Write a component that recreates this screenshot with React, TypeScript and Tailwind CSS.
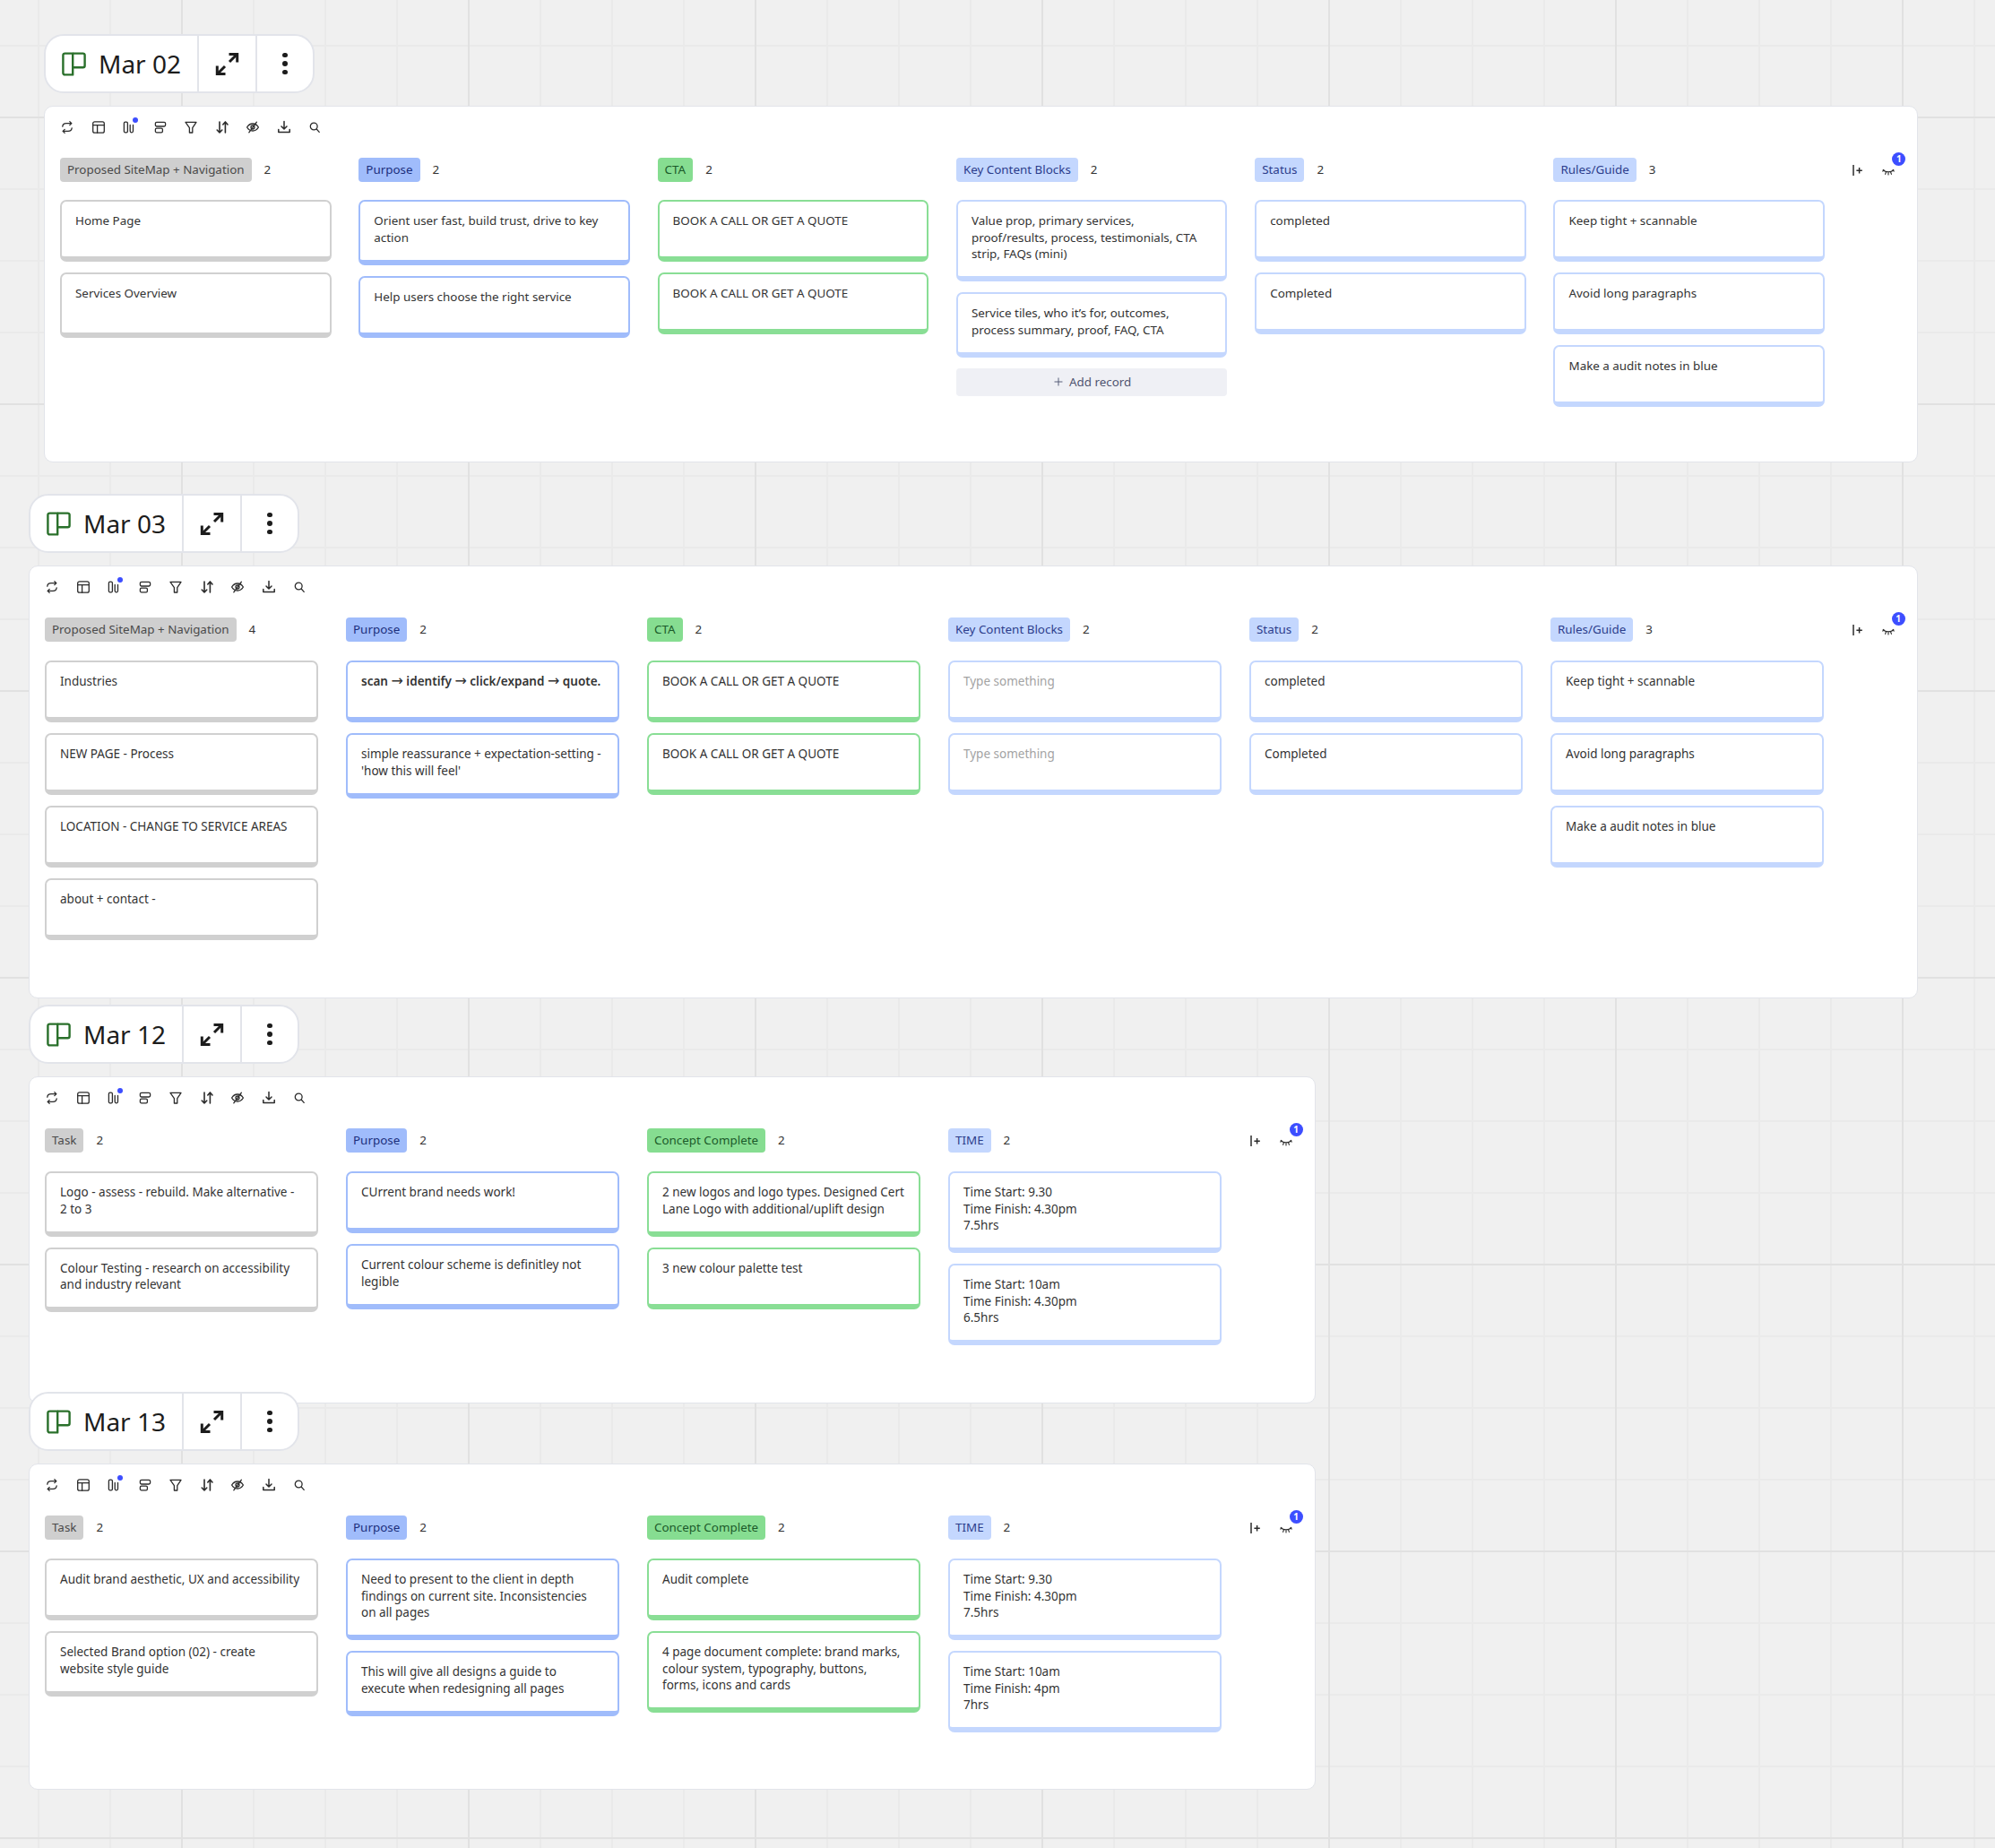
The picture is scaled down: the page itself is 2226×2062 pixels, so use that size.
import { Plus } from 'lucide-react'

type CardData = { text: string; tall?: boolean; placeholder?: boolean; bold?: boolean }
type Tone = 'gray' | 'blue' | 'green' | 'light'
type Column = { title: string; tone: Tone; count: number; cards: CardData[]; addRecord?: boolean }

const tagTone: Record<Tone, string> = {
  gray: 'bg-[#cfcfcf] text-[#4a4a4a]',
  blue: 'bg-[#a0bcfb] text-[#1c2f7d]',
  green: 'bg-[#86dd91] text-[#1b5a2a]',
  light: 'bg-[#c4d7fe] text-[#2c3d8c]',
}

const cardTone: Record<Tone, string> = {
  gray: 'border-[#d0d0d0]',
  blue: 'border-[#a0bcfb]',
  green: 'border-[#89de95]',
  light: 'border-[#c4d7fe]',
}

const t = (text: string): CardData => ({ text })
const cta = [t('BOOK A CALL OR GET A QUOTE'), t('BOOK A CALL OR GET A QUOTE')]
const status = [t('completed'), t('Completed')]
const rules = [t('Keep tight + scannable'), t('Avoid long paragraphs'), t('Make a audit notes in blue')]

const mar02: Column[] = [
  { title: 'Proposed SiteMap + Navigation', tone: 'gray', count: 2, cards: [t('Home Page'), { text: 'Services Overview', tall: true }] },
  { title: 'Purpose', tone: 'blue', count: 2, cards: [t('Orient user fast, build trust, drive to key action'), t('Help users choose the right service')] },
  { title: 'CTA', tone: 'green', count: 2, cards: cta },
  {
    title: 'Key Content Blocks',
    tone: 'light',
    count: 2,
    addRecord: true,
    cards: [
      t('Value prop, primary services, proof/results, process, testimonials, CTA strip, FAQs (mini)'),
      t('Service tiles, who it’s for, outcomes, process summary, proof, FAQ, CTA'),
    ],
  },
  { title: 'Status', tone: 'light', count: 2, cards: status },
  { title: 'Rules/Guide', tone: 'light', count: 3, cards: rules },
]

const mar03: Column[] = [
  {
    title: 'Proposed SiteMap + Navigation',
    tone: 'gray',
    count: 4,
    cards: [t('Industries'), t('NEW PAGE - Process'), t('LOCATION - CHANGE TO SERVICE AREAS'), t('about + contact -')],
  },
  {
    title: 'Purpose',
    tone: 'blue',
    count: 2,
    cards: [
      { text: 'scan → identify → click/expand → quote.', bold: true },
      t("simple reassurance + expectation-setting - 'how this will feel'"),
    ],
  },
  { title: 'CTA', tone: 'green', count: 2, cards: cta },
  {
    title: 'Key Content Blocks',
    tone: 'light',
    count: 2,
    cards: [
      { text: 'Type something', placeholder: true },
      { text: 'Type something', placeholder: true },
    ],
  },
  { title: 'Status', tone: 'light', count: 2, cards: status },
  { title: 'Rules/Guide', tone: 'light', count: 3, cards: rules },
]

const mar12: Column[] = [
  {
    title: 'Task',
    tone: 'gray',
    count: 2,
    cards: [t('Logo - assess - rebuild. Make alternative - 2 to 3'), t('Colour Testing - research on accessibility and industry relevant')],
  },
  { title: 'Purpose', tone: 'blue', count: 2, cards: [t('CUrrent brand needs work!'), t('Current colour scheme is definitley not legible')] },
  {
    title: 'Concept Complete',
    tone: 'green',
    count: 2,
    cards: [t('2 new logos and logo types. Designed Cert Lane Logo with additional/uplift design'), t('3 new colour palette test')],
  },
  {
    title: 'TIME',
    tone: 'light',
    count: 2,
    cards: [t('Time Start: 9.30\nTime Finish: 4.30pm\n7.5hrs'), t('Time Start: 10am\nTime Finish: 4.30pm\n6.5hrs')],
  },
]

const mar13: Column[] = [
  {
    title: 'Task',
    tone: 'gray',
    count: 2,
    cards: [t('Audit brand aesthetic, UX and accessibility'), t('Selected Brand option (02) - create\nwebsite style guide')],
  },
  {
    title: 'Purpose',
    tone: 'blue',
    count: 2,
    cards: [
      t('Need to present to the client in depth findings on current site. Inconsistencies on all pages'),
      t('This will give all designs a guide to\nexecute when redesigning all pages'),
    ],
  },
  {
    title: 'Concept Complete',
    tone: 'green',
    count: 2,
    cards: [t('Audit complete'), t('4 page document complete: brand marks, colour system, typography, buttons, forms, icons and cards')],
  },
  {
    title: 'TIME',
    tone: 'light',
    count: 2,
    cards: [t('Time Start: 9.30\nTime Finish: 4.30pm\n7.5hrs'), t('Time Start: 10am\nTime Finish: 4pm\n7hrs')],
  },
]

function ToolIcon({ children }: { children: React.ReactNode }) {
  return (
    <svg viewBox="0 0 16 16" fill="none" stroke="#2b2b2b" strokeWidth="1.3" strokeLinecap="round" strokeLinejoin="round" className="w-4 h-4 shrink-0">
      {children}
    </svg>
  )
}

function Toolbar() {
  return (
    <div className="flex items-center gap-[18.5px] h-4">
      {/* sync */}
      <ToolIcon>
        <path d="M2.8 7.2C3 4.8 4.8 3.6 7 3.6h5.6" />
        <path d="M10.8 1.6l2 2-2 2" />
        <path d="M13.2 8.8c-.2 2.4-2 3.6-4.2 3.6H3.4" />
        <path d="M5.2 10.4l-2 2 2 2" />
      </ToolIcon>
      {/* table layout */}
      <ToolIcon>
        <rect x="1.7" y="1.8" width="12.6" height="12.4" rx="2" />
        <path d="M1.7 5.6h12.6M6.6 5.6v8.6" />
      </ToolIcon>
      {/* kanban */}
      <div className="relative w-4 h-4 shrink-0">
        <ToolIcon>
          <rect x="2.4" y="2.2" width="4" height="11.6" rx="1.4" />
          <path d="M9.2 5.5v6.8c0 .9.6 1.5 1.5 1.5h.3c.9 0 1.5-.6 1.5-1.5V5.5" />
        </ToolIcon>
        <span className="absolute right-[-2px] top-[-3px] w-[6px] h-[6px] rounded-full bg-[#3d4eff]" />
      </div>
      {/* group */}
      <ToolIcon>
        <rect x="2.4" y="2.4" width="11.2" height="4.6" rx="1.4" />
        <rect x="2.4" y="9.2" width="8" height="4.6" rx="1.4" />
      </ToolIcon>
      {/* filter */}
      <ToolIcon>
        <path d="M2 2.4h12l-4.2 6.2v5.4H6.4V8.6z" />
      </ToolIcon>
      {/* sort */}
      <ToolIcon>
        <g strokeWidth="1.6">
          <path d="M5 2v12M2.2 11l2.8 3 2.8-3" />
          <path d="M11.4 14V2M8.8 5l2.6-3 2.6 3" />
        </g>
      </ToolIcon>
      {/* hidden fields */}
      <ToolIcon>
        <path d="M1.6 8s2.4-4 6.4-4 6.4 4 6.4 4-2.4 4-6.4 4-6.4-4-6.4-4z" />
        <circle cx="8" cy="8" r="2" />
        <path d="M12.4 2.2L3.8 13.8" />
      </ToolIcon>
      {/* download */}
      <ToolIcon>
        <g strokeWidth="1.5">
          <path d="M8 1.6v8.2M5 7l3 3 3-3" />
          <path d="M1.8 10.6v3h12.4v-3" />
        </g>
      </ToolIcon>
      {/* search */}
      <ToolIcon>
        <circle cx="7.2" cy="7" r="3.9" />
        <path d="M10.2 10l3 3.4" />
      </ToolIcon>
    </div>
  )
}

function BoardPill({ title }: { title: string }) {
  return (
    <div className="relative flex w-[302px] h-[66px] rounded-[22px] border-2 border-[#e2e4ea] bg-white">
      <div className="flex items-center gap-[14px] w-[171px] pl-[18px] border-r-2 border-[#e2e4ea]">
        <svg viewBox="0 0 27 27" fill="none" stroke="#2a702b" strokeWidth="2.4" strokeLinejoin="round" className="w-[27px] h-[27px] shrink-0">
          <path d="M3.4 1.6h8.8v23.8H3.4a2 2 0 0 1-2-2V3.6a2 2 0 0 1 2-2z" />
          <path d="M12.2 1.6h11.4a2 2 0 0 1 2 2v11.6a2 2 0 0 1-2 2H12.2" />
        </svg>
        <span className="text-[28px] leading-none text-[#1c1c1c] whitespace-nowrap">{title}</span>
      </div>
      <div className="flex items-center justify-center w-[65px] border-r-2 border-[#e2e4ea]">
        <svg viewBox="0 0 27 27" fill="none" stroke="#1c1c1c" strokeWidth="3" className="w-[27px] h-[27px]">
          <path d="M16 11L25 2" />
          <path d="M15.5 2.4H24.7V11.6" />
          <path d="M11 16L2 25" />
          <path d="M11.5 24.6H2.3V15.4" />
        </svg>
      </div>
      <div className="flex-1 flex flex-col items-center justify-center gap-[4px]">
        <span className="w-[5.5px] h-[5.5px] rounded-full bg-[#1c1c1c]" />
        <span className="w-[5.5px] h-[5.5px] rounded-full bg-[#1c1c1c]" />
        <span className="w-[5.5px] h-[5.5px] rounded-full bg-[#1c1c1c]" />
      </div>
    </div>
  )
}

function RecordCard({ card, tone, textClass }: { card: CardData; tone: Tone; textClass: string }) {
  return (
    <div
      className={`rounded-[7px] border-2 border-b-[6px] bg-white pt-3 pb-[15.5px] px-[15px] leading-[18.5px] whitespace-pre-line ${textClass} ${cardTone[tone]} ${
        card.tall ? 'min-h-[73px]' : 'min-h-[69px]'
      } ${card.placeholder ? 'text-[#a3a3a3]' : 'text-[#333333]'} ${card.bold ? 'font-semibold' : ''}`}
    >
      {card.bold
        ? card.text.split('→').map((part, i) => (
            <span key={i}>
              {i > 0 && <span className="font-['DejaVu_Sans',sans-serif] font-normal text-[16px] leading-none">→</span>}
              {part}
            </span>
          ))
        : card.text}
    </div>
  )
}

function BoardColumn({
  column,
  width,
  cardsClass,
  textClass,
}: {
  column: Column
  width: string
  cardsClass: string
  textClass: string
}) {
  return (
    <div className={`shrink-0 ${width}`}>
      <div className="flex items-center h-[27px]">
        <span className={`h-[27px] flex items-center px-2 rounded-[4px] text-[13.4px] whitespace-nowrap ${tagTone[column.tone]}`}>
          {column.title}
        </span>
        <span className="ml-[14px] text-[13.4px] text-[#333333]">{column.count}</span>
      </div>
      <div className={`flex flex-col gap-3 ${cardsClass}`}>
        {column.cards.map((card, i) => (
          <RecordCard key={i} card={card} tone={column.tone} textClass={textClass} />
        ))}
        {column.addRecord && (
          <div className="flex items-center justify-center gap-[5px] h-[31px] rounded-[4px] bg-[#eff0f5] text-[13.4px] text-[#4f5470]">
            <Plus className="w-[14px] h-[14px]" strokeWidth={1.6} />
            Add record
          </div>
        )}
      </div>
    </div>
  )
}

function ColumnControls() {
  return (
    <div className="relative flex items-center h-[27px] shrink-0 ml-[0.5px]">
      <svg viewBox="0 0 12 12" fill="none" stroke="#2b2b2b" className="w-3 h-3">
        <path d="M1 0v12" strokeWidth="1.5" />
        <path d="M4.4 6.2h6.4M7.6 3v6.4" strokeWidth="1.5" />
      </svg>
      <svg viewBox="0 0 14 8" fill="none" stroke="#2b2b2b" strokeWidth="1.1" strokeLinecap="round" className="ml-[21px] mt-[5px] w-[14px] h-2">
        <path d="M1.2 1.4C3.6 4.6 10.4 4.6 12.8 1.4" />
        <path d="M0.6 3l2-.8M3.6 6.4l.8-2.4M7 7V4.4M10.4 6.4l-.8-2.4M13.4 3l-2-.8" />
      </svg>
      <span className="absolute left-[44px] top-[-6px] w-[15px] h-[15px] rounded-full bg-[#3d4eff] text-white text-[10px] font-bold leading-[15px] text-center">
        1
      </span>
    </div>
  )
}

function Board({
  title,
  columns,
  className,
  panelClass,
  columnWidth,
  gapClass,
  cardsClass = 'mt-[21px]',
  textClass = 'text-[13.5px]',
}: {
  title: string
  columns: Column[]
  className: string
  panelClass: string
  columnWidth: string
  gapClass: string
  cardsClass?: string
  textClass?: string
}) {
  return (
    <section className={`relative ${className}`}>
      <BoardPill title={title} />
      <div className={`mt-[14px] rounded-[10px] border border-[#e2e4ea] bg-white pl-[17px] pt-[15px] ${panelClass}`}>
        <Toolbar />
        <div className={`mt-[26px] flex items-start ${gapClass}`}>
          {columns.map((column) => (
            <BoardColumn key={column.title} column={column} width={columnWidth} cardsClass={cardsClass} textClass={textClass} />
          ))}
          <ColumnControls />
        </div>
      </div>
    </section>
  )
}

export default function App() {
  return (
    <div className="h-[2062px] overflow-hidden pt-[38px] font-['Noto_Sans',sans-serif] bg-[#f0f0f0] bg-[linear-gradient(to_right,#e1e1e1_2px,transparent_2px),linear-gradient(to_bottom,#e1e1e1_2px,transparent_2px),linear-gradient(to_right,#eaeaea_2px,transparent_2px),linear-gradient(to_bottom,#eaeaea_2px,transparent_2px)] bg-[size:320px_320px,320px_320px,80px_80px,80px_80px] bg-[position:202px_0,0_130px,42px_0,0_50px]">
      <Board
        title="Mar 02"
        columns={mar02}
        className="ml-[49px]"
        panelClass="w-[2091px] h-[398px]"
        columnWidth="w-[302.5px]"
        gapClass="gap-[30.8px]"
        cardsClass="mt-5"
        textClass="text-[13.4px]"
      />
      <Board
        title="Mar 03"
        columns={mar03}
        className="ml-[32px] mt-[35px]"
        panelClass="w-[2108px] h-[483px]"
        columnWidth="w-[304.5px]"
        gapClass="gap-[31.5px]"
      />
      <Board
        title="Mar 12"
        columns={mar12}
        className="ml-[32px] mt-[7px]"
        panelClass="w-[1436px] h-[365px]"
        columnWidth="w-[304.5px]"
        gapClass="gap-[31.5px]"
      />
      <Board
        title="Mar 13"
        columns={mar13}
        className="ml-[32px] mt-[-13px]"
        panelClass="w-[1436px] h-[364px]"
        columnWidth="w-[304.5px]"
        gapClass="gap-[31.5px]"
      />
    </div>
  )
}
